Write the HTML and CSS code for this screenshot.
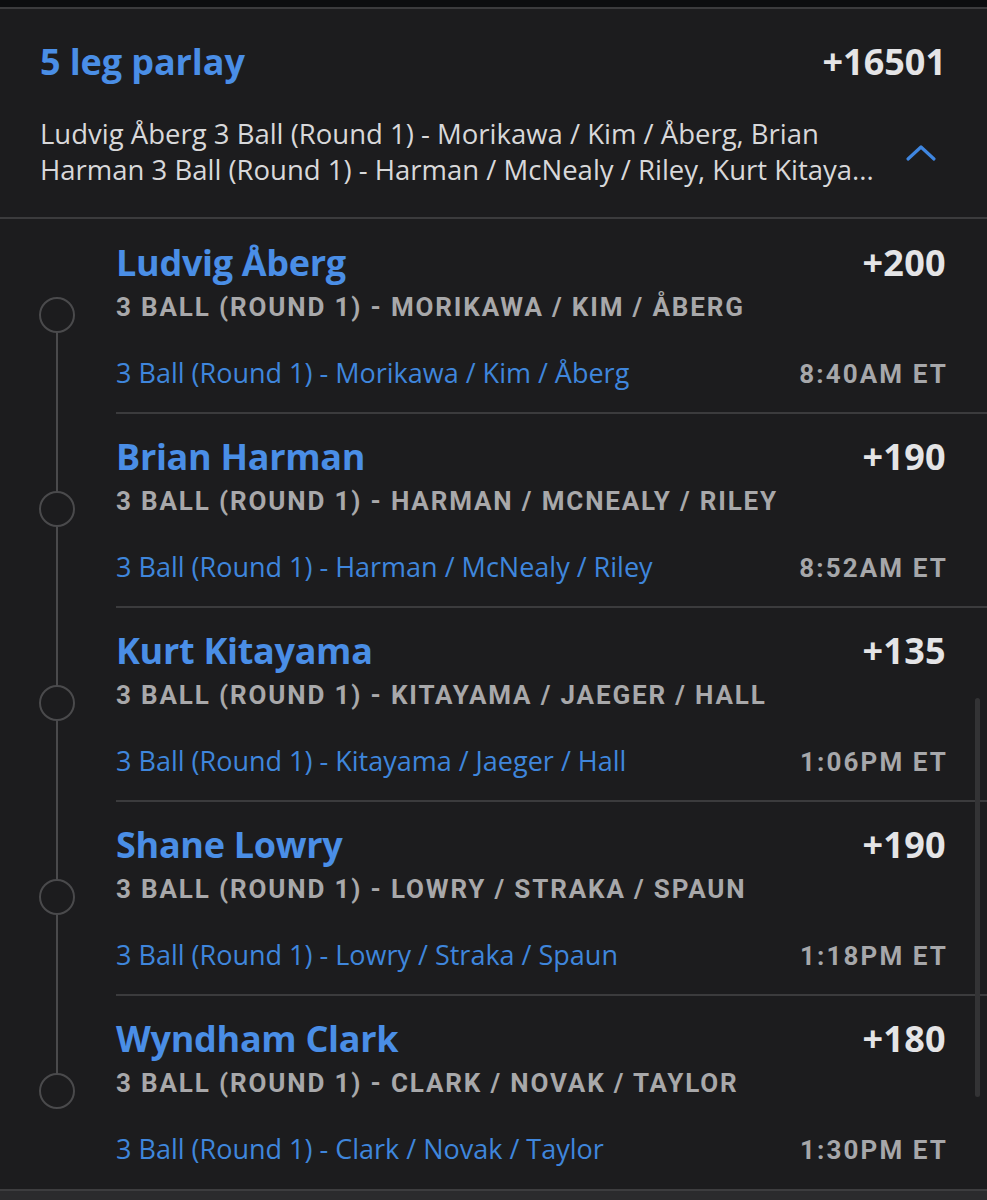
FILE: index.html
```html
<!DOCTYPE html>
<html lang="en">
<head>
<meta charset="utf-8">
<title>5 leg parlay</title>
<link rel="stylesheet" href="styles.css">
</head>
<body>
<div class="page">
  <div class="topstrip"></div>
  <section class="parlay">
    <header class="parlay-head">
      <div class="head-row">
        <h1 class="parlay-title">5 leg parlay</h1>
        <span class="parlay-odds">+16501</span>
      </div>
      <div class="desc-row">
        <p class="desc">
          <span class="desc-line">Ludvig Åberg 3 Ball (Round 1) - Morikawa / Kim / Åberg, Brian</span>
          <span class="desc-line">Harman 3 Ball (Round 1) - Harman / McNealy / Riley, Kurt Kitaya...</span>
        </p>
        <svg class="chevron" width="32" height="18" viewBox="0 0 32 18" aria-hidden="true">
          <path d="M3 15 L16 3 L29 15" fill="none" stroke="#3f86e0" stroke-width="3.2" stroke-linecap="round" stroke-linejoin="round"/>
        </svg>
      </div>
    </header>

    <div class="legs">
      <div class="leg leg-first">
        <div class="track"><span class="seg seg-top"></span><span class="dot"></span><span class="seg seg-bottom"></span></div>
        <div class="leg-body">
          <div class="leg-row">
            <span class="leg-name">Ludvig Åberg</span>
            <span class="leg-odds">+200</span>
          </div>
          <div class="leg-sub">3 BALL (ROUND 1) - MORIKAWA / KIM / ÅBERG</div>
          <div class="leg-row leg-meta">
            <span class="leg-market">3 Ball (Round 1) - Morikawa / Kim / Åberg</span>
            <span class="leg-time">8:40AM ET</span>
          </div>
        </div>
      </div>

      <div class="leg">
        <div class="track"><span class="seg seg-top"></span><span class="dot"></span><span class="seg seg-bottom"></span></div>
        <div class="leg-body">
          <div class="leg-row">
            <span class="leg-name">Brian Harman</span>
            <span class="leg-odds">+190</span>
          </div>
          <div class="leg-sub">3 BALL (ROUND 1) - HARMAN / MCNEALY / RILEY</div>
          <div class="leg-row leg-meta">
            <span class="leg-market">3 Ball (Round 1) - Harman / McNealy / Riley</span>
            <span class="leg-time">8:52AM ET</span>
          </div>
        </div>
      </div>

      <div class="leg">
        <div class="track"><span class="seg seg-top"></span><span class="dot"></span><span class="seg seg-bottom"></span></div>
        <div class="leg-body">
          <div class="leg-row">
            <span class="leg-name">Kurt Kitayama</span>
            <span class="leg-odds">+135</span>
          </div>
          <div class="leg-sub">3 BALL (ROUND 1) - KITAYAMA / JAEGER / HALL</div>
          <div class="leg-row leg-meta">
            <span class="leg-market">3 Ball (Round 1) - Kitayama / Jaeger / Hall</span>
            <span class="leg-time">1:06PM ET</span>
          </div>
        </div>
      </div>

      <div class="leg">
        <div class="track"><span class="seg seg-top"></span><span class="dot"></span><span class="seg seg-bottom"></span></div>
        <div class="leg-body">
          <div class="leg-row">
            <span class="leg-name">Shane Lowry</span>
            <span class="leg-odds">+190</span>
          </div>
          <div class="leg-sub">3 BALL (ROUND 1) - LOWRY / STRAKA / SPAUN</div>
          <div class="leg-row leg-meta">
            <span class="leg-market">3 Ball (Round 1) - Lowry / Straka / Spaun</span>
            <span class="leg-time">1:18PM ET</span>
          </div>
        </div>
      </div>

      <div class="leg leg-last">
        <div class="track"><span class="seg seg-top"></span><span class="dot"></span><span class="seg seg-bottom"></span></div>
        <div class="leg-body">
          <div class="leg-row">
            <span class="leg-name">Wyndham Clark</span>
            <span class="leg-odds">+180</span>
          </div>
          <div class="leg-sub">3 BALL (ROUND 1) - CLARK / NOVAK / TAYLOR</div>
          <div class="leg-row leg-meta">
            <span class="leg-market">3 Ball (Round 1) - Clark / Novak / Taylor</span>
            <span class="leg-time">1:30PM ET</span>
          </div>
        </div>
      </div>
    </div>
    <div class="scrollbar"></div>
  </section>
  <footer class="footer"></footer>
</div>
</body>
</html>
```

FILE: styles.css
```css
* { box-sizing: border-box; }

html, body {
  margin: 0;
  padding: 0;
  background: #1c1c1e;
}

body {
  font-family: "Open Sans", "Noto Sans", sans-serif;
  color: #dadadc;
}

.page {
  width: 987px;
  height: 1200px;
  overflow: hidden;
  display: flex;
  flex-direction: column;
}

.topstrip {
  height: 7px;
  background: #0c0d0f;
  border-bottom: 2px solid #3b3b3d;
  flex: none;
  box-sizing: content-box;
}

.parlay {
  position: relative;
  background: #1c1c1e;
  flex: none;
}

.parlay-head {
  padding: 31px 41px 29px 40px;
  border-bottom: 2px solid #3b3b3d;
}

.head-row {
  display: flex;
  justify-content: space-between;
  align-items: baseline;
  height: 44px;
}

.parlay-title {
  margin: 0;
  font-size: 36px;
  line-height: 44px;
  font-weight: 700;
  color: #4a8ee6;
  letter-spacing: -0.1px;
}

.parlay-odds {
  font-size: 36px;
  line-height: 44px;
  font-weight: 700;
  color: #e4e4e6;
}

.desc-row {
  margin-top: 32px;
  display: flex;
  align-items: center;
  justify-content: space-between;
}

.desc {
  margin: 0;
  font-size: 27.5px;
  line-height: 36px;
  color: #d8d8da;
}

.desc-line {
  display: block;
  white-space: nowrap;
}

.chevron {
  flex: none;
  margin-right: 9px;
  margin-top: 1px;
}

.legs {
  display: flex;
  flex-direction: column;
}

.leg {
  display: grid;
  grid-template-columns: 116px 1fr;
  height: 194px;
}

.track {
  display: flex;
  flex-direction: column;
  align-items: center;
  padding-right: 2px;
}

.seg {
  width: 2px;
  background: #4a4a4c;
}

.seg-top { height: 78px; flex: none; }
.seg-bottom { flex: 1; }

.leg-first .seg-top { background: transparent; }
.leg-last .seg-bottom { background: transparent; }

.dot {
  flex: none;
  width: 36px;
  height: 36px;
  border: 2px solid #4a4a4c;
  border-radius: 50%;
}

.leg-body {
  padding: 22px 41px 21px 0;
  border-bottom: 2px solid #3b3b3d;
}

.leg-last .leg-body {
  border-bottom: none;
}

.leg-row {
  display: flex;
  justify-content: space-between;
  align-items: baseline;
}

.leg-name {
  font-size: 36px;
  line-height: 44px;
  font-weight: 700;
  color: #4a8ee6;
  letter-spacing: -0.3px;
}

.leg-odds {
  font-size: 36px;
  line-height: 44px;
  font-weight: 700;
  color: #e4e4e6;
  letter-spacing: 0.3px;
}

.leg-sub {
  margin-top: 7px;
  font-family: "Roboto", "Open Sans", sans-serif;
  font-size: 26px;
  line-height: 30px;
  font-weight: 700;
  letter-spacing: 1.85px;
  color: #a8a8aa;
  white-space: nowrap;
}

.leg-meta {
  margin-top: 34px;
}

.leg-market {
  font-size: 27px;
  line-height: 34px;
  color: #3f86dc;
  white-space: nowrap;
}

.leg-time {
  font-family: "Roboto", "Open Sans", sans-serif;
  font-size: 26px;
  line-height: 34px;
  font-weight: 700;
  letter-spacing: 2.1px;
  color: #a6a7aa;
  margin-right: -2px;
}

.scrollbar {
  position: absolute;
  right: 7px;
  top: 689px;
  width: 5px;
  height: 399px;
  border-radius: 3px;
  background: #333335;
}

.footer {
  flex: 1;
  background: #2b2b2d;
  border-top: 2px solid #3d3d3f;
}
```
